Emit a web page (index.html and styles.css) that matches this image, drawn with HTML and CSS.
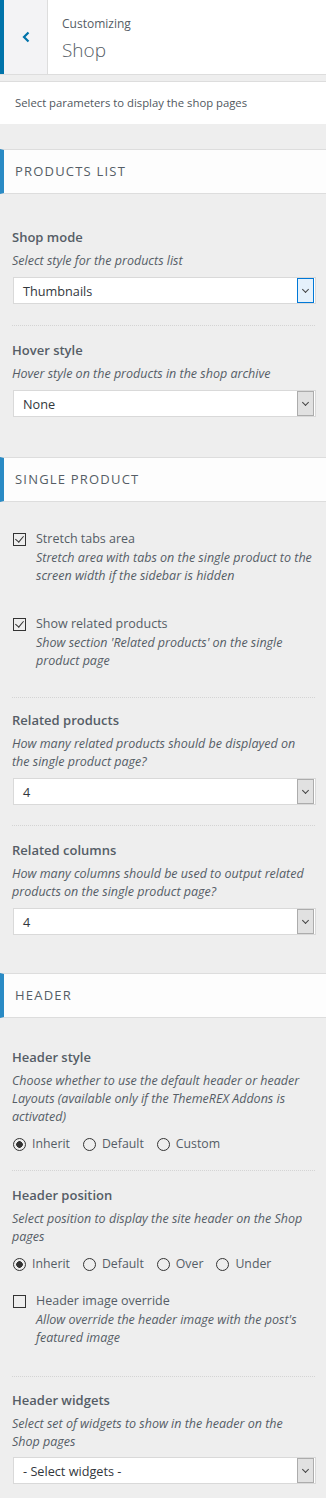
FILE: index.html
```html
<!DOCTYPE html>
<html>

<head>
    <link rel="stylesheet" href="styles.css">
</head>

<body>
    <div class="panel-head">
        <div class="back">
            <svg width="10" height="12" viewBox="0 0 10 12"><path d="M7.5 1.5 L3 6 L7.5 10.5" fill="none" stroke="#0073aa" stroke-width="2.2"/></svg>
        </div>
        <div class="panel-title">
            <span class="crumb">Customizing</span>
            <span class="name">Shop</span>
        </div>
    </div>

    <div class="intro">Select parameters to display the shop pages</div>

    <div class="section-title first">Products list</div>
    <div class="controls pad-first">
        <div class="control">
            <div class="label">Shop mode</div>
            <div class="desc">Select style for the products list</div>
            <div class="select focus"><span>Thumbnails</span><i class="arrow"></i></div>
        </div>
        <div class="sep"></div>
        <div class="control">
            <div class="label">Hover style</div>
            <div class="desc">Hover style on the products in the shop archive</div>
            <div class="select"><span>None</span><i class="arrow"></i></div>
        </div>
    </div>

    <div class="section-title">Single product</div>
    <div class="controls pad-check">
        <div class="check on">
            <i class="box"></i>
            <div>
                <div class="check-label">Stretch tabs area</div>
                <div class="desc">Stretch area with tabs on the single product to the screen width if the sidebar is hidden</div>
            </div>
        </div>
        <div class="check on second">
            <i class="box"></i>
            <div>
                <div class="check-label">Show related products</div>
                <div class="desc">Show section 'Related products' on the single product page</div>
            </div>
        </div>
        <div class="sep gap-check"></div>
        <div class="control">
            <div class="label">Related products</div>
            <div class="desc">How many related products should be displayed on the single product page?</div>
            <div class="select"><span>4</span><i class="arrow"></i></div>
        </div>
        <div class="sep less"></div>
        <div class="control">
            <div class="label">Related columns</div>
            <div class="desc">How many columns should be used to output related products on the single product page?</div>
            <div class="select"><span>4</span><i class="arrow"></i></div>
        </div>
    </div>

    <div class="section-title">Header</div>
    <div class="controls pad-last">
        <div class="control">
            <div class="label">Header style</div>
            <div class="desc">Choose whether to use the default header or header Layouts (available only if the ThemeREX Addons is activated)</div>
            <div class="radios">
                <span class="radio on">Inherit</span>
                <span class="radio">Default</span>
                <span class="radio">Custom</span>
            </div>
        </div>
        <div class="sep short"></div>
        <div class="control">
            <div class="label">Header position</div>
            <div class="desc">Select position to display the site header on the Shop pages</div>
            <div class="radios">
                <span class="radio on">Inherit</span>
                <span class="radio">Default</span>
                <span class="radio">Over</span>
                <span class="radio">Under</span>
            </div>
        </div>
        <div class="check after-radio">
            <i class="box"></i>
            <div>
                <div class="check-label">Header image override</div>
                <div class="desc">Allow override the header image with the post's featured image</div>
            </div>
        </div>
        <div class="sep gap-last"></div>
        <div class="control">
            <div class="label">Header widgets</div>
            <div class="desc">Select set of widgets to show in the header on the Shop pages</div>
            <div class="select tight"><span>- Select widgets -</span><i class="arrow"></i></div>
        </div>
    </div>
</body>

</html>
```

FILE: styles.css
```css
body {
    margin: 0;
    background-color: #eeeeee;
    font-family: "Open Sans", "Noto Sans", sans-serif;
    font-size: 12px;
    color: #555d66;
}

.panel-head {
    display: flex;
    height: 74px;
    background-color: #fff;
    border-bottom: 1px solid #dddddd;
}

.back {
    width: 43px;
    border-left: 4px solid #0073aa;
    border-right: 1px solid #dddddd;
    background-color: #f3f3f5;
    display: flex;
    align-items: center;
    justify-content: center;
}

.panel-title {
    display: flex;
    flex-direction: column;
    padding: 14px 0 0 14px;
}

.crumb {
    font-size: 12px;
    line-height: 20px;
}

.name {
    font-size: 19px;
    font-weight: 300;
    line-height: 28px;
    margin-top: 2px;
}

.intro {
    margin-top: 6px;
    background-color: #fff;
    border-top: 1px solid #dddddd;
    height: 42px;
    line-height: 42px;
    padding-left: 15px;
    font-size: 11.3px;
    color: #50575e;
}

.section-title {
    background-color: #fdfdfd;
    border-top: 1px solid #dddddd;
    border-bottom: 1px solid #dddddd;
    border-left: 4px solid #2a8bc5;
    height: 43px;
    line-height: 43px;
    padding-left: 11px;
    text-transform: uppercase;
    letter-spacing: 1.2px;
    font-size: 13px;
    color: #555d66;
}

.section-title.first {
    margin-top: 25px;
}

.controls {
    padding: 0 10px 40px 12px;
}

.pad-first {
    padding-top: 33px;
}

.pad-check {
    padding-top: 27px;
    padding-bottom: 38px;
}

.pad-last {
    padding-top: 29px;
    padding-bottom: 14px;
}

.label {
    font-size: 13px;
    font-weight: 600;
    line-height: 20px;
}

.desc {
    font-style: italic;
    font-size: 12.5px;
    line-height: 18px;
    margin-top: 5px;
}

.control .desc {
    padding-right: 8px;
}

.check .desc {
    margin-top: 0;
}

.select {
    margin: 7px 0 0 1px;
    height: 25px;
    border: 1px solid #d9d9d9;
    background-color: #fff;
    display: flex;
    align-items: center;
    justify-content: space-between;
    color: #32373c;
    font-size: 12.7px;
}

.select.tight {
    margin-top: 6px;
}

.select span {
    padding-left: 9px;
}

.arrow {
    width: 15px;
    height: 23px;
    margin-right: 1px;
    border: 1px solid #acacac;
    background-color: #e1e1e1;
    display: flex;
    align-items: center;
    justify-content: center;
}

.arrow::after {
    content: "";
    width: 4px;
    height: 4px;
    border-right: 1px solid #444;
    border-bottom: 1px solid #444;
    transform: rotate(45deg);
    margin-top: -3px;
}

.select.focus .arrow {
    border-color: #0078d7;
    background-color: #e5f1fb;
}

.sep {
    border-top: 1px dotted #d4d4d4;
    margin: 21px 1px 14px 0;
}

.sep.less {
    margin-top: 20px;
}

.sep.short {
    margin-top: 16px;
    margin-bottom: 14px;
}

.sep.gap-check {
    margin-top: 27px;
    margin-bottom: 12px;
}

.sep.gap-last {
    margin-top: 29px;
    margin-bottom: 13px;
}

.check {
    display: flex;
    padding-left: 1px;
}

.check.second {
    margin-top: 29px;
}

.check.after-radio {
    margin-top: 17px;
}

.check-label {
    font-size: 12.5px;
    line-height: 20px;
}

.box {
    flex: none;
    width: 11px;
    height: 11px;
    border: 1px solid #333;
    margin: 4px 10px 0 0;
    position: relative;
    background-color: transparent;
}

.check.on .box::after {
    content: "";
    position: absolute;
    left: 3px;
    top: 0;
    width: 4px;
    height: 7px;
    border-right: 1.5px solid #333;
    border-bottom: 1.5px solid #333;
    transform: rotate(40deg);
}

.radios {
    display: flex;
    gap: 13px;
    margin-top: 8px;
    padding-left: 1px;
    line-height: 20px;
    font-size: 12.3px;
}

.radio {
    display: flex;
    align-items: center;
}

.radio::before {
    content: "";
    width: 11px;
    height: 11px;
    border: 1px solid #333;
    border-radius: 50%;
    margin-right: 6px;
    box-sizing: content-box;
}

.radio.on::before {
    background: radial-gradient(circle, #333 0 3px, transparent 3.6px);
}
```
